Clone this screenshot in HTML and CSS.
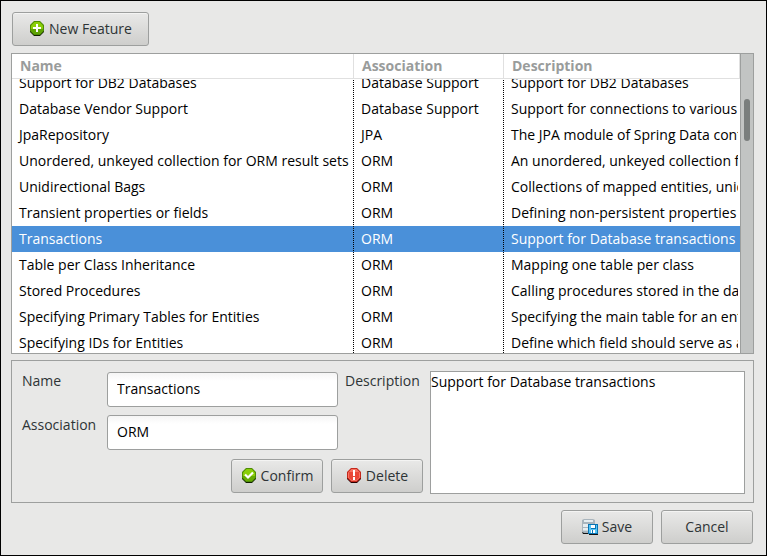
FILE: index.html
```html
<!DOCTYPE html>
<html lang="en">
<head>
<meta charset="utf-8">
<title>Features</title>
<link rel="stylesheet" href="styles.css">
</head>
<body>
<main class="window">
  <div class="toolbar">
    <button class="button button-wide" type="button">
      <svg class="icon" viewBox="0 0 16 16" aria-hidden="true">
        <path fill="#102000" d="M5 3h6l4 3v5l-4 4H5l-4-4V6z"/>
        <path fill="#4e8c05" d="M5 0h6l4 4v6l-4 4H5l-4-4V4z"/>
        <path fill="#8ace08" d="M5.500 1h5L14 4.500v5L10.500 13h-5L2 9.500v-5z"/>
        <path fill="#5ea304" d="M2 8h12v1.500L10.500 13h-5L2 9.500z"/>
        <path fill="#fff" d="M7 3h2v3h3v2H9v3H7V8H4V6h3z"/>
      </svg>
      New Feature
    </button>
  </div>

  <div class="list">
    <div class="list-view" id="features">
      <table class="features">
        <colgroup><col class="col-name"><col class="col-association"><col></colgroup>
        <thead><tr><th scope="col">Name</th><th scope="col">Association</th><th scope="col">Description</th></tr></thead>
        <tbody>
          <tr><td>Support for DB2 Databases</td><td>Database Support</td><td>Support for DB2 Databases</td></tr>
          <tr><td>Database Vendor Support</td><td>Database Support</td><td>Support for connections to various databases</td></tr>
          <tr><td>JpaRepository</td><td>JPA</td><td>The JPA module of Spring Data contains</td></tr>
          <tr><td>Unordered, unkeyed collection for ORM result sets</td><td>ORM</td><td>An unordered, unkeyed collection for results</td></tr>
          <tr><td>Unidirectional Bags</td><td>ORM</td><td>Collections of mapped entities, unidirectional</td></tr>
          <tr><td>Transient properties or fields</td><td>ORM</td><td>Defining non-persistent properties or fields</td></tr>
          <tr class="selected"><td>Transactions</td><td>ORM</td><td>Support for Database transactions</td></tr>
          <tr><td>Table per Class Inheritance</td><td>ORM</td><td>Mapping one table per class</td></tr>
          <tr><td>Stored Procedures</td><td>ORM</td><td>Calling procedures stored in the database</td></tr>
          <tr><td>Specifying Primary Tables for Entities</td><td>ORM</td><td>Specifying the main table for an entity</td></tr>
          <tr><td>Specifying IDs for Entities</td><td>ORM</td><td>Define which field should serve as an ID</td></tr>
        </tbody>
      </table>
    </div>
    <div class="scrollbar"><div class="thumb"></div></div>
  </div>

  <form class="editor">
    <label class="label" for="name">Name</label>
    <input class="field" id="name" type="text" value="Transactions">
    <label class="label label-description" for="description">Description</label>
    <textarea class="description" id="description">Support for Database transactions</textarea>
    <label class="label" for="association">Association</label>
    <input class="field" id="association" type="text" value="ORM">
    <div class="editor-actions">
      <button class="button" type="button">
        <svg class="icon" viewBox="0 0 16 16" aria-hidden="true">
          <path fill="#102000" d="M5 3h6l4 3v5l-4 4H5l-4-4V6z"/>
          <path fill="#4e8c05" d="M5 0h6l4 4v6l-4 4H5l-4-4V4z"/>
          <path fill="#8ace08" d="M5.500 1h5L14 4.500v5L10.500 13h-5L2 9.500v-5z"/>
          <path fill="#66ab04" d="M2 8h12v1.500L10.500 13h-5L2 9.500z"/>
          <path fill="none" stroke="#fff" stroke-width="2.200" d="M4 6.500l3 3L12 4.500"/>
        </svg>
        Confirm
      </button>
      <button class="button" type="button">
        <svg class="icon" viewBox="0 0 16 16" aria-hidden="true">
          <path fill="#280000" d="M5 3h6l4 3v5l-4 4H5l-4-4V6z"/>
          <path fill="#c5281c" d="M5 0h6l4 4v6l-4 4H5l-4-4V4z"/>
          <path fill="#f77463" d="M5.500 1h5L14 4.500v5L10.500 13h-5L2 9.500v-5z"/>
          <path fill="#ea4837" d="M3 4h10v5.500L10.500 12h-5L3 9.500z"/>
          <path fill="#fff" d="M7 2h2v6H7zM7 9h2v3H7z"/>
        </svg>
        Delete
      </button>
    </div>
  </form>

  <div class="footer">
    <button class="button" type="button">
      <svg class="icon" viewBox="0 0 16 16" aria-hidden="true">
        <path fill="#111" d="M0 13h6v2H1zM7 15h9v1H7z"/>
        <path fill="#a9b5bd" d="M2 0h9l2 1v12l-2 1H2l-2-1V1z"/>
        <path fill="#e6edf0" d="M2 1h9v2H2zM1 5h10v3H1zM1 9h9v3H1z"/>
        <path fill="#cbd5da" d="M7 5h5v3H7zM1 11h6v1H1z"/>
        <path fill="#0875b5" d="M6 5h10v10H6z"/>
        <path fill="#55c5f5" d="M7 6h8v8H7z"/>
        <path fill="#fff" d="M9 6h4v3H9zM9 11h4v3H9z"/>
        <path fill="#0875b5" d="M10 11h1v3h-1zM8 6h1v4h5V6h-1v3H9V6z"/>
      </svg>
      Save
    </button>
    <button class="button" type="button">Cancel</button>
  </div>
</main>
<script src="app.js"></script>
</body>
</html>
```
FILE: styles.css
```css
* { box-sizing: border-box; }

body {
  margin: 0;
  color: #2e3436;
  font-family: "Open Sans", "Noto Sans", sans-serif;
  font-size: 14px;
  line-height: 20px;
}

button, input, textarea { font: inherit; }

.window {
  display: flex;
  flex-direction: column;
  height: 100vh;
  min-height: 400px;
  padding: 11px 12px 11px 10px;
  border: 1px solid #000;
  background: #e8e8e7;
}

.toolbar { display: flex; padding: 0 1px; }

.button {
  display: flex;
  align-items: center;
  justify-content: center;
  gap: 4px;
  min-width: 92px;
  height: 34px;
  padding: 0 8px;
  border: 1px solid #9d9f9e;
  border-radius: 3px;
  background: linear-gradient(#e9e9e8, #cececc);
  box-shadow: inset 0 1px #f4f4f3;
  color: #2e3436;
  white-space: nowrap;
}

.button-wide { min-width: 137px; }

.icon { flex: none; width: 16px; height: 16px; }

.list {
  display: flex;
  flex: 1;
  min-height: 0;
  margin-top: 7px;
  border: 1px solid #9d9f9e;
  background: #fff;
}

.list-view { flex: 1; min-width: 0; overflow: hidden; }

.features {
  width: 100%;
  table-layout: fixed;
  border-spacing: 0;
  color: #000;
}

.col-name { width: 342px; }
.col-association { width: 150px; }

.features th {
  position: sticky;
  top: 0;
  height: 25px;
  padding: 0 8px;
  border-right: 1px solid #e0e0e0;
  border-bottom: 1px solid #e0e0e0;
  background: #fff;
  color: #999c9b;
  text-align: left;
}

.features td {
  height: 26px;
  padding: 0 0 0 7px;
  overflow: hidden;
  background: repeating-linear-gradient(#000 0 1px, transparent 1px 2px) right / 1px 100% no-repeat;
  white-space: nowrap;
}

.features td:last-child {
  border-right: 2px solid transparent;
  background: none;
}

.features .selected { background: #4a90d9; color: #fff; }

.scrollbar {
  width: 13px;
  padding: 45px 3px 0;
  border-left: 1px solid #9d9f9e;
  background: #c2c4c3;
}

.thumb { height: 42px; border-radius: 3px; background: #7a7e7d; }

.editor {
  display: grid;
  grid-template-columns: 85px 231px 92px minmax(0, 1fr);
  grid-template-rows: 36px 35px 36px;
  row-gap: 8px;
  margin-top: 6px;
  padding: 10px 8px 8px 10px;
  border: 1px solid #9d9f9e;
}

.label-description { padding-left: 7px; }

.field {
  align-self: end;
  width: 100%;
  height: 35px;
  padding: 0 9px 2px;
  border: 1px solid #9d9f9e;
  border-radius: 3px;
  background: linear-gradient(#f5f5f5, #fff 8px);
  color: #000;
}

.description {
  grid-column: 4;
  grid-row: 1 / 4;
  padding: 0;
  border: 1px solid #9d9f9e;
  background: #fff;
  color: #000;
  resize: none;
}

.editor-actions {
  display: flex;
  grid-column: 1 / 4;
  align-items: center;
  justify-content: flex-end;
  gap: 8px;
  padding-right: 7px;
}

.footer {
  display: flex;
  justify-content: flex-end;
  gap: 8px;
  margin-top: 7px;
  padding: 0 1px;
}
```
FILE: app.js
```js
document.getElementById("features").scrollTop = 9;
```
